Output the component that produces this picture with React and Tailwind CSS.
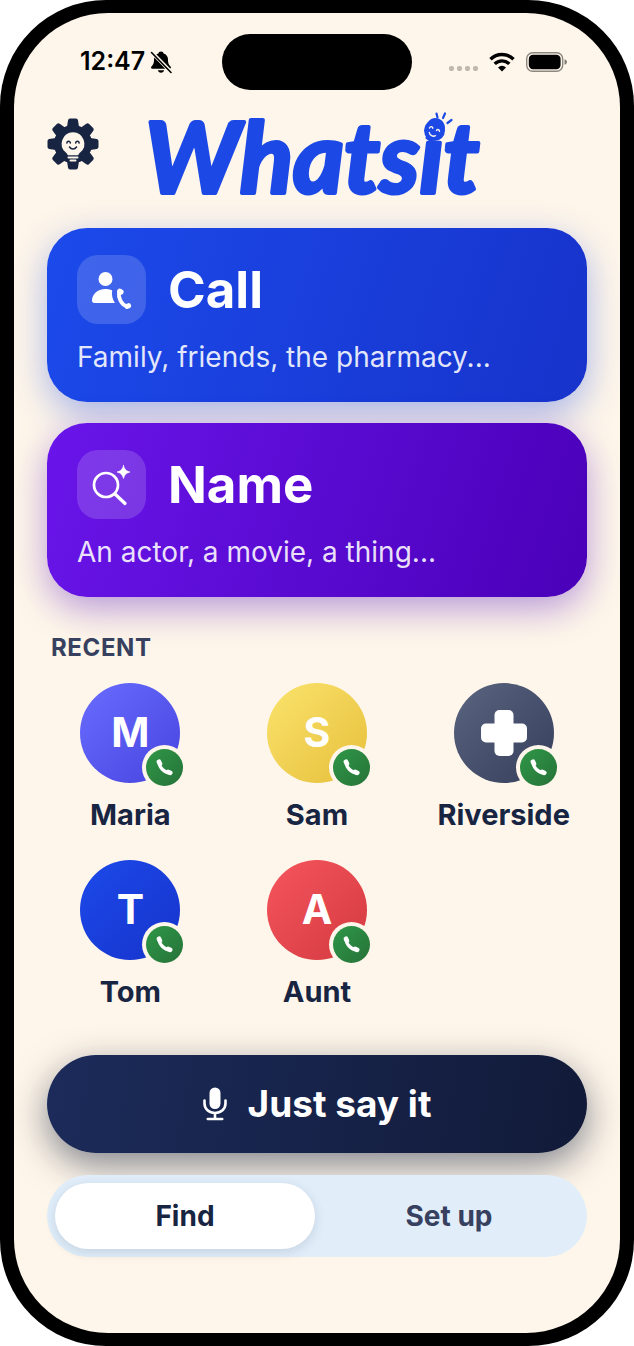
import React, { useState } from 'react';

const people = [
  { name: 'Maria', initial: 'M', tone: 'from-[#6a6cff] to-[#4743df]' },
  { name: 'Sam', initial: 'S', tone: 'from-[#fbe36c] to-[#e6bf38]' },
  { name: 'Riverside', initial: null, tone: 'from-[#5a6580] to-[#363e5b]' },
  { name: 'Tom', initial: 'T', tone: 'from-[#1c49ea] to-[#1733cb]' },
  { name: 'Aunt', initial: 'A', tone: 'from-[#f6555d] to-[#d43a40]' },
];

function Handset(props) {
  return (
    <svg viewBox="0 0 24 24" fill="none" stroke="currentColor" strokeLinecap="round" aria-hidden="true" {...props}>
      <path d="M5.5 6C5.5 12 12 18.5 18 18.5" strokeWidth="4.2" />
      <path d="M5 4.8L6.2 7.2M17 17.8L19.2 18.8" strokeWidth="6" />
    </svg>
  );
}

function BellOff() {
  return (
    <svg className="h-6 w-6" viewBox="0 0 24 24" aria-hidden="true">
      <path d="M12 1.5c-1.6 0-2.400.9-2.600 2C6.700 4.300 5 6.500 5 9.300c0 4.200-.9 5.500-2.500 7.200-.9 1-.5 2.300.9 2.300h17.200c1.400 0 1.800-1.300.9-2.300-1.600-1.700-2.500-3-2.500-7.200 0-2.800-1.700-5-4.400-5.800-.2-1.100-1-2-2.600-2zM8.800 20.200c.4 1.500 1.600 2.500 3.200 2.500s2.800-1 3.200-2.500z" />
      <path d="M2.500 2l20 20.500" stroke="#fef6ea" strokeWidth="3.800" />
      <path d="M2.500 2.500l19.500 20" stroke="#000" strokeWidth="1.600" strokeLinecap="round" />
    </svg>
  );
}

function Wifi() {
  return (
    <svg className="h-5 w-[26px]" viewBox="0 0 26 20" fill="none" stroke="#000" strokeWidth="3.400" aria-hidden="true">
      <path d="M1.500 7.200a16.300 16.300 0 0 1 23 0" />
      <path d="M5.700 11.900a10.300 10.300 0 0 1 14.600 0" />
      <path d="M13 19.500l-4-4a5.700 5.700 0 0 1 8 0z" fill="#000" stroke="none" />
    </svg>
  );
}

function Battery() {
  return (
    <svg className="h-5 w-[42px]" viewBox="0 0 42 20" aria-hidden="true">
      <rect x="0.700" y="0.700" width="36" height="18.600" rx="6" fill="none" stroke="#000" strokeOpacity="0.450" strokeWidth="1.400" />
      <rect x="2.800" y="2.800" width="31.800" height="14.400" rx="4.200" />
      <path d="M38.500 7.200c1.700.6 2.500 1.600 2.500 2.800s-.8 2.200-2.500 2.800z" fillOpacity="0.500" />
    </svg>
  );
}

function GearBulb() {
  return (
    <svg className="h-[52px] w-[52px]" viewBox="0 0 52 52" aria-hidden="true">
      <g fill="#182542" stroke="#182542" strokeWidth="4" strokeLinejoin="round">
        <circle cx="26" cy="26" r="17" />
        {[0, 45, 90, 135, 180, 225, 270, 315].map((a) => (
          <path key={a} d="M22 9l1-6.500h6L30 9z" transform={`rotate(${a} 26 26)`} />
        ))}
      </g>
      <path d="M26 14.200a11.400 11.400 0 0 0-7.400 20c1.200 1.100 1.900 1.900 2.100 3.100h10.600c.2-1.200.9-2 2.100-3.100a11.400 11.400 0 0 0-7.400-20z" fill="#fef6ea" />
      <path d="M21.500 39.500h9M23.500 42.500h5" stroke="#fef6ea" strokeWidth="2" strokeLinecap="round" />
      <path d="M19.800 25c.5-2.200 3-2.200 3.600 0M28.600 25c.6-2.200 3.100-2.200 3.600 0M22.500 29c1.700 2.700 5.300 2.700 7 0" fill="none" stroke="#182542" strokeWidth="1.500" strokeLinecap="round" />
    </svg>
  );
}

function Logo() {
  return (
    <svg className="h-[92px] w-[344px] overflow-visible" viewBox="0 0 344 92" role="img" aria-label="Whatsit">
      <text
        x="0"
        y="75"
        className="font-['Lato',sans-serif] text-[98px] font-bold italic"
        fill="#1c49e6"
        stroke="#1c49e6"
        strokeWidth="4"
        strokeLinejoin="round"
      >
        Whatsit
      </text>
      {/* smiling bulb as the dot of the i */}
      <g transform="translate(-15 -17)" strokeLinecap="round" fill="none">
        <circle cx="304.500" cy="29.500" r="10.500" fill="#1c49e6" />
        <path d="M296.500 32l-1 5.500 5 3.500 4-2z" fill="#1c49e6" />
        <path d="M307.500 16.500l-1-4M313 17l2-4.500M317.500 22l4-3" stroke="#1c49e6" strokeWidth="2.200" />
        <path d="M299.500 27c.8-1.900 2.900-1.700 3.300.2M306.500 29.500c1-1.700 2.900-1.100 3 .9M299.300 31.500c.5 3 3.500 4.500 6.200 3.200" stroke="#fef6ea" strokeWidth="1.400" />
      </g>
    </svg>
  );
}

function CallIcon() {
  return (
    <svg className="h-full w-full" viewBox="0 0 69 69" fill="#fff" aria-hidden="true">
      <circle cx="28.500" cy="24" r="7" />
      <path d="M28.500 34c-8.200 0-13.400 5.500-13.500 11.600 0 1.600.8 2.400 2.400 2.400h20.500c-2.500-4-3.500-8-2.700-12.500-2-1-4.200-1.500-6.700-1.500z" />
      <g fill="none" stroke="#fff" strokeLinecap="round">
        <path d="M42 37c-1 6 2.500 13 8 14.500" strokeWidth="3.800" />
        <path d="M42.800 36.200l1.200.8M50 51.400l1.500-.6" strokeWidth="5.200" />
      </g>
    </svg>
  );
}

function NameIcon() {
  return (
    <svg className="h-full w-full" viewBox="0 0 69 69" fill="none" stroke="#fff" strokeWidth="2.700" strokeLinecap="round" aria-hidden="true">
      <circle cx="29" cy="35" r="12" />
      <path d="M38 44l10 9.500" strokeWidth="3.200" />
      <path d="M46.500 15.500c1.200 4 2.500 5.300 6.500 6.500-4 1.200-5.300 2.500-6.500 6.500-1.200-4-2.500-5.300-6.500-6.500 4-1.200 5.300-2.500 6.500-6.500z" fill="#fff" stroke="#fff" strokeWidth="0.600" />
    </svg>
  );
}

function Mic() {
  return (
    <svg className="h-[34px] w-6" viewBox="0 0 24 34" fill="none" stroke="#fff" strokeWidth="2.600" strokeLinecap="round" aria-hidden="true">
      <rect x="6.500" y="0.500" width="11" height="21.500" rx="5.500" fill="#fff" stroke="none" />
      <path d="M1.500 13.500v2.800c0 5.700 4.500 9.700 10.500 9.700s10.500-4 10.500-9.700v-2.800M12 26v6M4.800 32h14.400" />
    </svg>
  );
}

function ActionCard({ title, hint, icon, tone }) {
  return (
    <button type="button" className={`flex w-full flex-col gap-[15px] rounded-[40px] bg-linear-[108deg] px-[30px] py-[27px] text-left ${tone}`}>
      <span className="flex items-center gap-[22px]">
        <span className="h-[69px] w-[69px] rounded-[21px] bg-white/16">{icon}</span>
        <span className="text-[51px] leading-[60px] font-bold text-white">{title}</span>
      </span>
      <span className="text-[28px] leading-9 text-white/88">{hint}</span>
    </button>
  );
}

function Person({ name, initial, tone }) {
  return (
    <button type="button" className="flex flex-col items-center gap-3">
      <span className={`relative flex h-[100px] w-[100px] items-center justify-center rounded-full bg-linear-to-br text-[41px] font-bold text-white ${tone}`}>
        {initial || (
          <svg className="h-[46px] w-[46px]" viewBox="0 0 46 46" fill="#fff" aria-hidden="true">
            <rect x="13.500" width="19" height="46" rx="5" />
            <rect y="13.500" width="46" height="19" rx="5" />
          </svg>
        )}
        <span className="absolute -right-[7px] -bottom-[7px] h-[45px] w-[45px] rounded-full bg-[#fef6ea] p-1">
          <span className="flex h-full w-full items-center justify-center rounded-full bg-linear-to-br from-[#2f9747] to-[#267339]">
            <Handset className="h-[19px] w-[19px]" />
          </span>
        </span>
      </span>
      <span className="text-[29px] leading-10 font-bold text-[#182542]">{name}</span>
    </button>
  );
}

export default function App() {
  const [tab, setTab] = useState('find');

  return (
    <div className="flex min-h-screen flex-col rounded-[106px] bg-black px-[14px] py-[13px] font-['Inter','Liberation_Sans',sans-serif]">
      <div className="flex flex-1 flex-col overflow-hidden rounded-[94px] bg-[#fef6ea]">
        {/* Status bar */}
        <div className="mt-[21px] flex h-[56px] items-center justify-between px-[52px]">
          <div className="flex flex-1 items-center gap-1 text-[25px] font-semibold text-black">
            <span className="ml-[14px]">12:47</span>
            <BellOff />
          </div>
          <div className="h-full w-[190px] rounded-full bg-black" />
          <div className="flex flex-1 items-center justify-end gap-[11px]">
            <span className="flex gap-[3px] pt-3">
              {[0, 1, 2, 3].map((i) => (
                <span key={i} className="h-[5px] w-[5px] rounded-[2px] bg-black/25" />
              ))}
            </span>
            <Wifi />
            <Battery />
          </div>
        </div>

        <main className="flex flex-1 flex-col px-[33px] pb-[76px]">
          {/* Header */}
          <header className="flex h-[138px] items-start pt-7">
            <button type="button" aria-label="Settings">
              <GearBulb />
            </button>
            <h1 className="ml-[46px]">
              <Logo />
            </h1>
          </header>

          <div className="flex flex-col gap-[21px]">
            <ActionCard
              title="Call"
              hint="Family, friends, the pharmacy..."
              icon={<CallIcon />}
              tone="from-[#1c4aeb] to-[#1733cb] shadow-[0_12px_36px_rgba(28,73,230,0.38)]"
            />
            <ActionCard
              title="Name"
              hint="An actor, a movie, a thing..."
              icon={<NameIcon />}
              tone="from-[#6915ea] to-[#4a00b8] shadow-[0_12px_36px_rgba(80,15,190,0.4)]"
            />
          </div>

          {/* Recent calls */}
          <h2 className="mt-9 pl-1 text-[24px] leading-[30px] font-bold tracking-wide text-[#37415f]">RECENT</h2>
          <div className="mt-5 grid grid-cols-3 gap-x-5 gap-y-[25px]">
            {people.map((p) => (
              <Person key={p.name} {...p} />
            ))}
          </div>

          <button
            type="button"
            className="mt-auto flex h-[98px] w-full shrink-0 items-center justify-center gap-[21px] rounded-full bg-linear-[100deg] from-[#1c2b5a] to-[#111a38] text-[37px] font-bold text-white shadow-[0_12px_36px_rgba(17,26,56,0.52)]"
          >
            <Mic />
            Just say it
          </button>

          <nav className="relative mt-[22px] flex h-[82px] shrink-0 gap-1 rounded-full bg-[#e1eefa] p-2 text-[28px] font-bold">
            <button
              type="button"
              onClick={() => setTab('find')}
              className={`flex-1 rounded-full ${tab === 'find' ? 'bg-white text-[#182542] shadow-[0_3px_12px_rgba(24,37,66,0.14)]' : 'text-[#37415f]'}`}
            >
              Find
            </button>
            <button
              type="button"
              onClick={() => setTab('setup')}
              className={`flex-1 rounded-full ${tab === 'setup' ? 'bg-white text-[#182542] shadow-[0_3px_12px_rgba(24,37,66,0.14)]' : 'text-[#37415f]'}`}
            >
              Set up
            </button>
          </nav>
        </main>
      </div>
    </div>
  );
}
